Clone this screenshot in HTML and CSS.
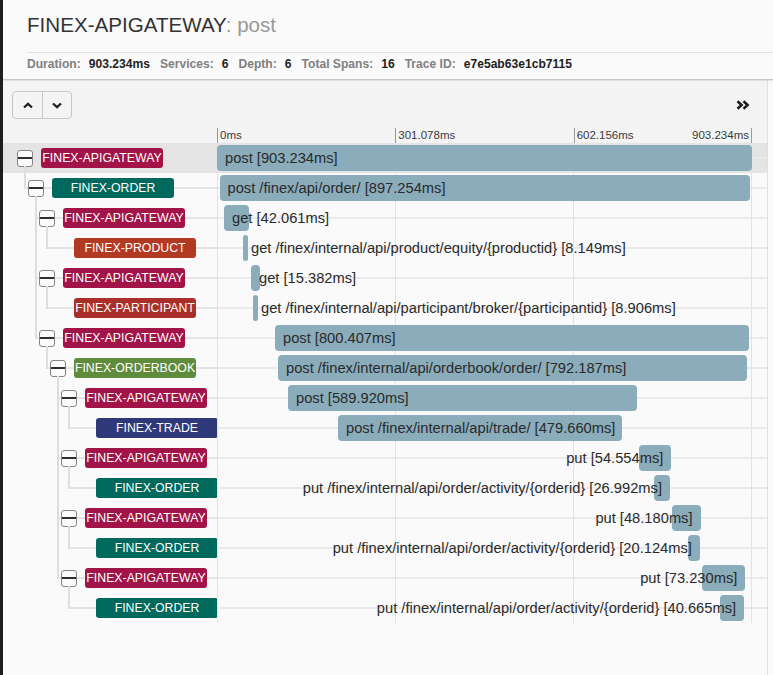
FILE: index.html
```html
<!DOCTYPE html>
<html>
<head>
<meta charset="utf-8">
<link rel="stylesheet" href="styles.css">
</head>
<body>
<header class="header">
  <h1 class="title">FINEX-APIGATEWAY<span class="op">: post</span></h1>
  <div class="divider"></div>
  <div class="stats">
    <div class="stat"><span class="k">Duration:</span><span class="v">903.234ms</span></div>
    <div class="stat"><span class="k">Services:</span><span class="v">6</span></div>
    <div class="stat"><span class="k">Depth:</span><span class="v">6</span></div>
    <div class="stat"><span class="k">Total Spans:</span><span class="v">16</span></div>
    <div class="stat"><span class="k">Trace ID:</span><span class="v">e7e5ab63e1cb7115</span></div>
  </div>
</header>
<main class="main">
  <div class="toolbar">
    <div class="btn-group">
      <div class="btn"><svg width="10" height="7" viewBox="0 0 10 7"><polyline points="1,5.5 5,1.8 9,5.5" fill="none" stroke="#222" stroke-width="2.3"/></svg></div>
      <div class="btn"><svg width="10" height="7" viewBox="0 0 10 7"><polyline points="1,1.5 5,5.2 9,1.5" fill="none" stroke="#222" stroke-width="2.3"/></svg></div>
    </div>
    <svg class="expand" width="14" height="10" viewBox="0 0 14 10"><polyline points="1.5,1.2 5.6,5 1.5,8.8" fill="none" stroke="#1d1d1d" stroke-width="2.6"/><polyline points="7.5,1.2 11.6,5 7.5,8.8" fill="none" stroke="#1d1d1d" stroke-width="2.6"/></svg>
  </div>
  <div class="ticks">
    <div class="ticks-spacer"></div>
    <div class="ticks-lane">
      <div class="tick">0ms</div>
      <div class="tick">301.078ms</div>
      <div class="tick last"><span>602.156ms</span><span>903.234ms</span></div>
    </div>
  </div>
  <div class="rows">
    <div class="row sel">
      <div class="tree"><div class="node"><div class="toggle"></div><div class="svc gw">FINEX-APIGATEWAY</div></div></div>
      <div class="lane"><div class="bar" style="margin-left:0%;width:100%"><span>post [903.234ms]</span></div></div>
      <div class="tail"></div>
    </div>
    <div class="row">
      <div class="tree"><div class="g elbow"></div><div class="node"><div class="toggle"></div><div class="svc order">FINEX-ORDER</div></div></div>
      <div class="lane"><div class="bar" style="margin-left:0.47%;width:99.15%"><span>post /finex/api/order/ [897.254ms]</span></div></div>
      <div class="tail"></div>
    </div>
    <div class="row">
      <div class="tree"><div class="g"></div><div class="g tee"></div><div class="node"><div class="toggle"></div><div class="svc gw">FINEX-APIGATEWAY</div></div></div>
      <div class="lane"><div class="bar" style="margin-left:1.31%;width:4.657%"><span>get [42.061ms]</span></div></div>
      <div class="tail"></div>
    </div>
    <div class="row">
      <div class="tree"><div class="g"></div><div class="g pipe"></div><div class="g elbow"></div><div class="node"><div class="leaf"></div><div class="svc product">FINEX-PRODUCT</div></div></div>
      <div class="lane"><div class="bar" style="margin-left:4.86%;width:0.902%"><span>get /finex/internal/api/product/equity/{productid} [8.149ms]</span></div></div>
      <div class="tail"></div>
    </div>
    <div class="row">
      <div class="tree"><div class="g"></div><div class="g tee"></div><div class="node"><div class="toggle"></div><div class="svc gw">FINEX-APIGATEWAY</div></div></div>
      <div class="lane"><div class="bar" style="margin-left:6.36%;width:1.703%"><span>get [15.382ms]</span></div></div>
      <div class="tail"></div>
    </div>
    <div class="row">
      <div class="tree"><div class="g"></div><div class="g pipe"></div><div class="g elbow"></div><div class="node"><div class="leaf"></div><div class="svc participant">FINEX-PARTICIPANT</div></div></div>
      <div class="lane"><div class="bar" style="margin-left:6.73%;width:0.986%"><span>get /finex/internal/api/participant/broker/{participantid} [8.906ms]</span></div></div>
      <div class="tail"></div>
    </div>
    <div class="row">
      <div class="tree"><div class="g"></div><div class="g elbow"></div><div class="node"><div class="toggle"></div><div class="svc gw">FINEX-APIGATEWAY</div></div></div>
      <div class="lane"><div class="bar" style="margin-left:10.84%;width:88.616%"><span>post [800.407ms]</span></div></div>
      <div class="tail"></div>
    </div>
    <div class="row">
      <div class="tree"><div class="g"></div><div class="g"></div><div class="g elbow"></div><div class="node"><div class="toggle"></div><div class="svc orderbook">FINEX-ORDERBOOK</div></div></div>
      <div class="lane"><div class="bar" style="margin-left:11.40%;width:87.706%"><span>post /finex/internal/api/orderbook/order/ [792.187ms]</span></div></div>
      <div class="tail"></div>
    </div>
    <div class="row">
      <div class="tree"><div class="g"></div><div class="g"></div><div class="g"></div><div class="g tee"></div><div class="node"><div class="toggle"></div><div class="svc gw">FINEX-APIGATEWAY</div></div></div>
      <div class="lane"><div class="bar" style="margin-left:13.27%;width:65.312%"><span>post [589.920ms]</span></div></div>
      <div class="tail"></div>
    </div>
    <div class="row">
      <div class="tree"><div class="g"></div><div class="g"></div><div class="g"></div><div class="g pipe"></div><div class="g elbow"></div><div class="node"><div class="leaf"></div><div class="svc trade">FINEX-TRADE</div></div></div>
      <div class="lane"><div class="bar" style="margin-left:22.62%;width:53.104%"><span>post /finex/internal/api/trade/ [479.660ms]</span></div></div>
      <div class="tail"></div>
    </div>
    <div class="row">
      <div class="tree"><div class="g"></div><div class="g"></div><div class="g"></div><div class="g tee"></div><div class="node"><div class="toggle"></div><div class="svc gw">FINEX-APIGATEWAY</div></div></div>
      <div class="lane"><div class="bar r" style="margin-left:78.88%;width:6.040%"><span>put [54.554ms]</span></div></div>
      <div class="tail"></div>
    </div>
    <div class="row">
      <div class="tree"><div class="g"></div><div class="g"></div><div class="g"></div><div class="g pipe"></div><div class="g elbow"></div><div class="node"><div class="leaf"></div><div class="svc order">FINEX-ORDER</div></div></div>
      <div class="lane"><div class="bar r" style="margin-left:81.68%;width:2.988%"><span>put /finex/internal/api/order/activity/{orderid} [26.992ms]</span></div></div>
      <div class="tail"></div>
    </div>
    <div class="row">
      <div class="tree"><div class="g"></div><div class="g"></div><div class="g"></div><div class="g tee"></div><div class="node"><div class="toggle"></div><div class="svc gw">FINEX-APIGATEWAY</div></div></div>
      <div class="lane"><div class="bar r" style="margin-left:85.05%;width:5.334%"><span>put [48.180ms]</span></div></div>
      <div class="tail"></div>
    </div>
    <div class="row">
      <div class="tree"><div class="g"></div><div class="g"></div><div class="g"></div><div class="g pipe"></div><div class="g elbow"></div><div class="node"><div class="leaf"></div><div class="svc order">FINEX-ORDER</div></div></div>
      <div class="lane"><div class="bar r" style="margin-left:88.04%;width:2.228%"><span>put /finex/internal/api/order/activity/{orderid} [20.124ms]</span></div></div>
      <div class="tail"></div>
    </div>
    <div class="row">
      <div class="tree"><div class="g"></div><div class="g"></div><div class="g"></div><div class="g elbow"></div><div class="node"><div class="toggle"></div><div class="svc gw">FINEX-APIGATEWAY</div></div></div>
      <div class="lane"><div class="bar r" style="margin-left:90.65%;width:8.107%"><span>put [73.230ms]</span></div></div>
      <div class="tail"></div>
    </div>
    <div class="row">
      <div class="tree"><div class="g"></div><div class="g"></div><div class="g"></div><div class="g"></div><div class="g elbow"></div><div class="node"><div class="leaf"></div><div class="svc order">FINEX-ORDER</div></div></div>
      <div class="lane"><div class="bar r" style="margin-left:94.02%;width:4.502%"><span>put /finex/internal/api/order/activity/{orderid} [40.665ms]</span></div></div>
      <div class="tail"></div>
    </div>
  </div>
</main>
</body>
</html>
```
FILE: styles.css
```css
* { box-sizing: border-box; }
html, body { margin: 0; padding: 0; }
body {
  background: #fafafa;
  border-left: 3px solid #1e1e1e;
  height: 675px;
  overflow: hidden;
  font-family: "Liberation Sans", Arial, Helvetica, sans-serif;
  color: #333;
}

/* header */
.header {
  height: 80px;
  padding-left: 24px;
  background: #fafafa;
  border-bottom: 1px solid #c6c6c6;
  box-shadow: 0 1px 1px rgba(0,0,0,0.07);
  position: relative;
  z-index: 1;
}
.title {
  margin: 0;
  padding-top: 13px;
  font-size: 20.6px;
  line-height: 24px;
  font-weight: normal;
  color: #333;
}
.title .op { color: #999; }
.divider {
  margin-top: 15px;
  height: 1px;
  background: #e2e2e2;
}
.stats {
  margin-top: 4px;
  display: flex;
  font-size: 12.1px;
  line-height: 14px;
  font-weight: bold;
}
.stat { display: flex; gap: 8px; margin-right: 10px; }
.stat .k { color: #808080; }
.stat .v { color: #222; }

/* main */
.main {
  width: 765px;
  height: 595px;
  border-right: 1px solid #e0e0e0;
  background: #fafafa;
}
.toolbar {
  display: flex;
  align-items: center;
  justify-content: space-between;
  padding: 11px 17px 9px 9px;
  background: #f4f4f4;
}
.btn-group {
  display: flex;
  height: 28px;
  border: 1px solid #c6c6c6;
  border-radius: 4px;
}
.btn {
  width: 29px;
  display: flex;
  align-items: center;
  justify-content: center;
}
.btn + .btn { border-left: 1px solid #c6c6c6; }
.expand { display: block; }

.ticks {
  display: flex;
  height: 15px;
  background: #f4f4f4;
}
.ticks-spacer { width: 214px; flex-shrink: 0; }
.ticks-lane {
  width: 535px;
  display: grid;
  grid-template-columns: repeat(3, 1fr);
}
.tick {
  border-left: 1px solid #9a9a9a;
  padding-left: 2px;
  font-size: 11.5px;
  line-height: 15px;
  color: #3a3a3a;
  white-space: nowrap;
}
.tick.last {
  display: flex;
  justify-content: space-between;
  border-right: 1px solid #9a9a9a;
  padding-right: 2px;
}

/* rows */
.rows { background: #fafafa; }
.row { display: flex; height: 30px; }
.row.sel { background: #e4e4e4; }

.tree {
  width: 214px;
  flex-shrink: 0;
  display: flex;
  padding-left: 14px;
}
.g { width: 11px; flex-shrink: 0; }
.g.pipe {
  background: linear-gradient(#dedede, #dedede) 7px 0 / 2px 100% no-repeat;
}
.g.tee {
  background:
    linear-gradient(#dedede, #dedede) 7px 0 / 2px 100% no-repeat,
    linear-gradient(#e4e4e4, #e4e4e4) 7px 14px / 4px 2px no-repeat;
}
.g.elbow {
  background:
    linear-gradient(#dedede, #dedede) 7px 0 / 2px 16px no-repeat,
    linear-gradient(#e4e4e4, #e4e4e4) 7px 14px / 4px 2px no-repeat;
}
.node {
  flex: 1;
  min-width: 0;
  display: flex;
  align-items: center;
  background: linear-gradient(#e4e4e4, #e4e4e4) 0 14px / 100% 2px no-repeat;
}
.toggle {
  position: relative;
  width: 16px;
  height: 17px;
  margin-right: 8px;
  flex-shrink: 0;
  border: 1px solid #858585;
  border-radius: 3px;
  background: linear-gradient(#2e2e2e, #2e2e2e) 0 50% / 100% 2px no-repeat, #fbfbfb;
}
.toggle::after {
  content: "";
  position: absolute;
  left: 6px;
  top: 100%;
  width: 2px;
  height: 8px;
  background: #dedede;
}
.leaf { width: 24px; flex-shrink: 0; }
.svc {
  width: 122px;
  height: 20px;
  flex-shrink: 0;
  display: flex;
  justify-content: center;
  border-radius: 3px;
  color: #fff;
  font-size: 12.3px;
  line-height: 20px;
  white-space: nowrap;
}
.svc.gw { background: #a21347; }
.svc.order { background: #00695d; }
.svc.product { background: #b33a22; }
.svc.participant { background: #aa2f2a; }
.svc.orderbook { background: #5f8b3d; }
.svc.trade { background: #2f3979; }

.lane {
  width: 535px;
  flex-shrink: 0;
  display: flex;
  align-items: center;
  background:
    linear-gradient(#e2e2e2, #e2e2e2) 0 0 / 1px 100% no-repeat,
    linear-gradient(#e2e2e2, #e2e2e2) 33.333% 0 / 1px 100% no-repeat,
    linear-gradient(#e2e2e2, #e2e2e2) 66.667% 0 / 1px 100% no-repeat,
    linear-gradient(#e2e2e2, #e2e2e2) 100% 0 / 1px 100% no-repeat,
    linear-gradient(#eaeaea, #eaeaea) 0 14px / 100% 2px no-repeat;
}
.bar {
  height: 26px;
  flex-shrink: 0;
  display: flex;
  align-items: center;
  border-radius: 4px;
  background: #8aacbb;
}
.bar span {
  flex-shrink: 0;
  margin-left: 8px;
  white-space: nowrap;
  font-size: 14.7px;
  color: #2a2a2a;
}
.bar.r { justify-content: flex-end; }
.bar.r span { margin-left: 0; margin-right: 8px; }
.tail {
  flex: 1;
  background: linear-gradient(#eaeaea, #eaeaea) 0 14px / 100% 2px no-repeat;
}
```
